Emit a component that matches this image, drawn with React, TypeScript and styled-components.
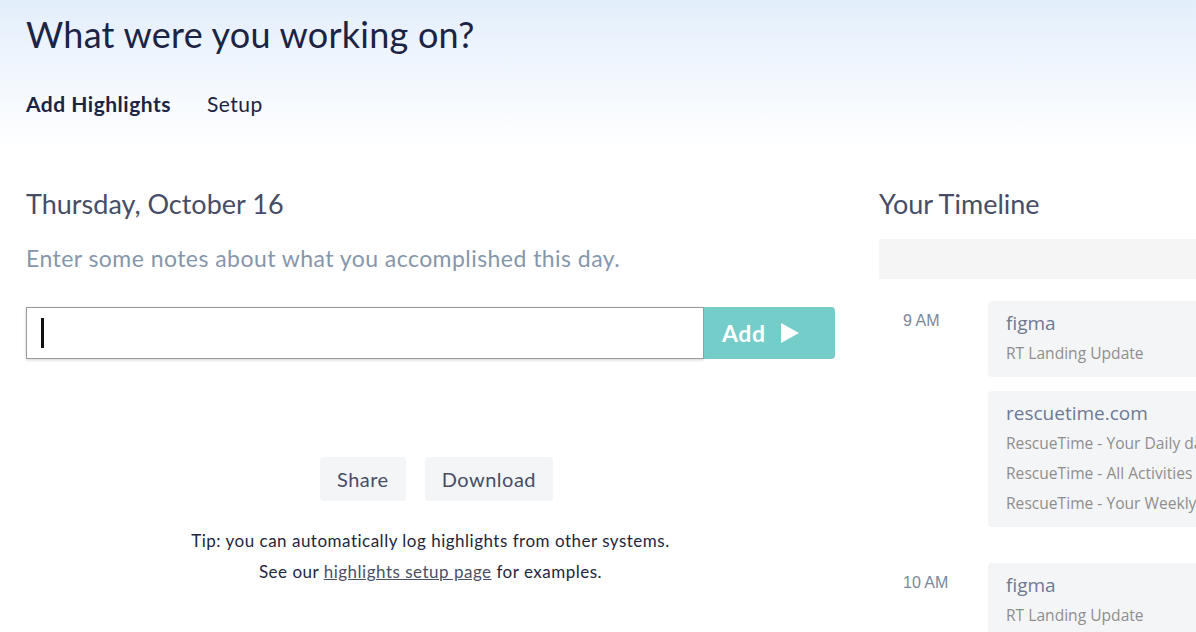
import React from "react"
import styled, { createGlobalStyle } from "styled-components"

const GlobalStyle = createGlobalStyle`
  html, body {
    margin: 0;
    padding: 0;
    background: #fff;
    overflow: hidden;
  }
  body {
    font-family: Lato, "Open Sans", sans-serif;
    color: #1f2640;
  }
`

const Page = styled.div`
  width: 1196px;
  height: 632px;
  overflow: hidden;
`

const Header = styled.header`
  padding: 14px 26px 0;
  height: 150px;
  box-sizing: border-box;
  background: linear-gradient(180deg, #e3eefb 0%, #f3f8fe 55%, #ffffff 100%);
`

const Title = styled.h1`
  margin: 0;
  font-size: 36px;
  line-height: 40px;
  font-weight: 400;
  color: #1c2444;
  letter-spacing: 0.25px;
`

const Tabs = styled.nav`
  display: flex;
  gap: 36px;
  margin-top: 38px;
`

const Tab = styled.a<{ $active?: boolean }>`
  font-size: 21px;
  line-height: 24px;
  letter-spacing: 0.5px;
  font-weight: ${(p) => (p.$active ? 700 : 400)};
  color: #1c2444;
  text-decoration: none;
  cursor: pointer;
`

const Main = styled.main`
  display: flex;
  gap: 44px;
  padding: 38px 0 0 26px;
`

const LeftColumn = styled.section`
  width: 809px;
  flex: 0 0 auto;
`

const SectionTitle = styled.h2`
  margin: 0;
  font-size: 27px;
  line-height: 32px;
  font-weight: 400;
  color: #474d66;
`

const Hint = styled.p`
  margin: 24px 0 0;
  font-size: 23px;
  line-height: 28px;
  letter-spacing: 0.45px;
  color: #8696ab;
`

const EntryRow = styled.form`
  display: flex;
  margin-top: 35px;
  height: 52px;
`

const Field = styled.label`
  flex: 1;
  display: flex;
  align-items: center;
  border: 1px solid #9b9b9b;
  box-shadow: 0 1px 3px rgba(0, 0, 0, 0.18);
  background: #fff;
  box-sizing: border-box;
`

const Caret = styled.span`
  width: 3px;
  height: 30px;
  margin-left: 14px;
  background: #111;
  flex: 0 0 auto;
`

const NoteInput = styled.input`
  flex: 1;
  border: 0;
  outline: none;
  background: transparent;
  font: inherit;
  font-size: 20px;
  height: 100%;
  padding: 0 8px;
`

const AddButton = styled.button`
  width: 131px;
  border: 0;
  border-radius: 0 4px 4px 0;
  background: #74cdc8;
  color: #fff;
  font-family: Lato, sans-serif;
  font-size: 23px;
  font-weight: 700;
  display: flex;
  align-items: center;
  padding: 0 0 0 18px;
  gap: 14px;
  cursor: pointer;
  letter-spacing: 0.6px;
`

const Actions = styled.div`
  display: flex;
  justify-content: center;
  gap: 19px;
  margin: 98px 0 0 12px;
`

const GhostButton = styled.button`
  height: 44px;
  padding: 0 17px;
  border: 0;
  border-radius: 4px;
  background: #f4f5f7;
  color: #474d66;
  font-family: Lato, sans-serif;
  font-size: 20px;
  letter-spacing: 0.5px;
  cursor: pointer;
`

const Tip = styled.p`
  margin: 24px 0 0;
  text-align: center;
  font-size: 17px;
  line-height: 31px;
  letter-spacing: 0.5px;
  color: #1f2640;

  a {
    color: #4a5068;
    text-decoration: underline;
  }
`

const Timeline = styled.aside`
  flex: 1;
  min-width: 420px;
`

const FilterBar = styled.div`
  height: 40px;
  margin-top: 19px;
  background: #f5f5f6;
`

const HourGroup = styled.div`
  display: flex;
  margin-top: 22px;

  & + & {
    margin-top: 36px;
  }
`

const HourLabel = styled.div`
  width: 109px;
  flex: 0 0 auto;
  padding: 10px 0 0 24px;
  box-sizing: border-box;
  font-family: "Liberation Sans", Arial, sans-serif;
  font-size: 16px;
  line-height: 20px;
  color: #7a889c;
`

const Cards = styled.div`
  flex: 1;
  display: flex;
  flex-direction: column;
  gap: 14px;
`

const Card = styled.div`
  background: #f4f5f7;
  border-radius: 4px 0 0 4px;
  padding: 7px 18px 9px;
`

const CardTitle = styled.div`
  font-family: "Open Sans", sans-serif;
  font-size: 19px;
  line-height: 30px;
  color: #6c7a92;
`

const CardLine = styled.div`
  font-family: "Open Sans", sans-serif;
  font-size: 15.6px;
  line-height: 30px;
  color: #8e8e8e;
  white-space: nowrap;
`

const PlayIcon = () => (
  <svg width="20" height="22" viewBox="0 0 20 22" aria-hidden="true">
    <path d="M1 1 L19 11 L1 21 Z" fill="#fff" />
  </svg>
)

const timeline = [
  {
    hour: "9 AM",
    items: [
      { app: "figma", lines: ["RT Landing Update"] },
      {
        app: "rescuetime.com",
        lines: [
          "RescueTime - Your Daily dashboard",
          "RescueTime - All Activities",
          "RescueTime - Your Weekly report",
        ],
      },
    ],
  },
  {
    hour: "10 AM",
    items: [{ app: "figma", lines: ["RT Landing Update"] }],
  },
]

export default function App() {
  return (
    <Page>
      <GlobalStyle />
      <Header>
        <Title>What were you working on?</Title>
        <Tabs>
          <Tab $active>Add Highlights</Tab>
          <Tab>Setup</Tab>
        </Tabs>
      </Header>
      <Main>
        <LeftColumn>
          <SectionTitle>Thursday, October 16</SectionTitle>
          <Hint>Enter some notes about what you accomplished this day.</Hint>
          <EntryRow onSubmit={(e) => e.preventDefault()}>
            <Field>
              <Caret />
              <NoteInput type="text" aria-label="Highlight" />
            </Field>
            <AddButton type="submit">
              Add
              <PlayIcon />
            </AddButton>
          </EntryRow>
          <Actions>
            <GhostButton>Share</GhostButton>
            <GhostButton>Download</GhostButton>
          </Actions>
          <Tip>
            Tip: you can automatically log highlights from other systems.
            <br />
            See our <a href="#setup">highlights setup page</a> for examples.
          </Tip>
        </LeftColumn>
        <Timeline>
          <SectionTitle>Your Timeline</SectionTitle>
          <FilterBar />
          {timeline.map((group) => (
            <HourGroup key={group.hour}>
              <HourLabel>{group.hour}</HourLabel>
              <Cards>
                {group.items.map((item, i) => (
                  <Card key={i}>
                    <CardTitle>{item.app}</CardTitle>
                    {item.lines.map((line) => (
                      <CardLine key={line}>{line}</CardLine>
                    ))}
                  </Card>
                ))}
              </Cards>
            </HourGroup>
          ))}
        </Timeline>
      </Main>
    </Page>
  )
}
